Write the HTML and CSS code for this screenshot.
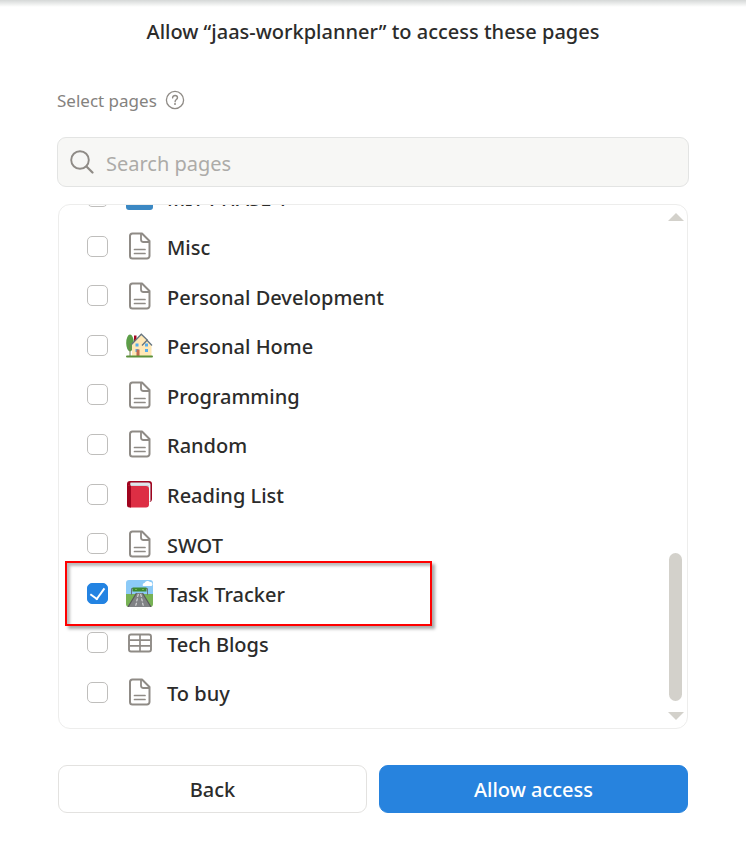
FILE: index.html
```html
<!DOCTYPE html>
<html lang="en">
<head>
  <meta charset="UTF-8" />
  <meta name="viewport" content="width=device-width, initial-scale=1" />
  <title>Allow access</title>
  <link rel="stylesheet" href="styles.css">
</head>
<body>

  <svg class="sprite" aria-hidden="true">
    <symbol id="icon-page" viewBox="0 0 28 28">
      <path d="M6.500 1.500h9.500l7.500 7.500v15a2.500 2.500 0 0 1-2.500 2.500H6.500a2.500 2.500 0 0 1-2.500-2.500V4a2.500 2.500 0 0 1 2.500-2.500z" fill="none" stroke="#8f8b86" stroke-width="2" stroke-linejoin="round"/>
      <path d="M15 2v5.500a2.500 2.500 0 0 0 2.500 2.500H23" fill="none" stroke="#8f8b86" stroke-width="1.800"/>
      <path d="M8.500 17.500h10.500M8.500 21.500h10.500" stroke="#8f8b86" stroke-width="1.700" stroke-linecap="round"/>
    </symbol>
    <symbol id="icon-table" viewBox="0 0 28 28">
      <rect x="3" y="5.500" width="22" height="17" rx="2" fill="none" stroke="#8f8b86" stroke-width="1.900"/>
      <path d="M3.500 11.200h21M3.500 16.800h21M14 5.500v17" stroke="#8f8b86" stroke-width="1.700"/>
    </symbol>
  </svg>

  <main class="dialog">
    <h1>Allow “jaas-workplanner” to access these pages</h1>

    <div class="select-label">
      <label for="search">Select pages</label>
      <svg class="help" viewBox="0 0 20 20" aria-hidden="true">
        <circle cx="10" cy="10" r="8.600" fill="none" stroke="#8f8b86" stroke-width="1.300"/>
        <path d="M7.600 7.900c0-1.500 1.100-2.400 2.500-2.400s2.400.9 2.400 2.200c0 1.800-2.400 1.900-2.400 4" fill="none" stroke="#8f8b86" stroke-width="1.400" stroke-linecap="round"/>
        <circle cx="10" cy="14" r="1" fill="#8f8b86"/>
      </svg>
    </div>

    <div class="search">
      <svg viewBox="0 0 24 24" aria-hidden="true">
        <circle cx="10" cy="10" r="8.800" fill="none" stroke="#8f8b86" stroke-width="1.900"/>
        <path d="M16.500 16.500l6 6" stroke="#8f8b86" stroke-width="2.200" stroke-linecap="round"/>
      </svg>
      <input type="text" id="search" placeholder="Search pages">
    </div>

    <div class="panel">
      <div class="pages">
        <label class="page">
          <input type="checkbox">
          <svg class="icon" viewBox="0 0 28 28" aria-hidden="true">
            <rect x="0" y="1" width="27" height="26" rx="3" fill="#3b88c3"/>
            <path d="M13.500 6v16" stroke="#fff" stroke-width="3"/>
          </svg>
          <span>MIT PHASE 1</span>
        </label>
        <label class="page">
          <input type="checkbox">
          <svg class="icon" aria-hidden="true"><use href="#icon-page"/></svg>
          <span>Misc</span>
        </label>
        <label class="page">
          <input type="checkbox">
          <svg class="icon" aria-hidden="true"><use href="#icon-page"/></svg>
          <span>Personal Development</span>
        </label>
        <label class="page">
          <input type="checkbox">
          <svg class="icon" viewBox="0 0 28 28" aria-hidden="true">
            <ellipse cx="4" cy="12" rx="3.800" ry="8.500" fill="#5c9e48"/>
            <path d="M3.500 13h1v12h-1z" fill="#77804f"/>
            <path d="M8 4.500h2.500V11H8z" fill="#a0041e"/>
            <path d="M6 13l9-9.500 6 6 4.500 5.500v11H6z" fill="#ffe8b6"/>
            <path d="M5.500 13.500L15.300 3.200l6.200 6" fill="none" stroke="#66757f" stroke-width="1.300"/>
            <path d="M16 14.500l5-5.300 5 5.300" fill="none" stroke="#66757f" stroke-width="1.300"/>
            <path d="M9.500 12.500h3v3h-3zM9.500 18h3v3h-3zM19 12.500h3v3h-3zM19 18h3v3h-3z" fill="#55acee"/>
            <path d="M10.500 18.500h3v6.500h-3z" fill="#c1694f"/>
            <rect x="0" y="24.500" width="27" height="2" rx="1" fill="#5c913b"/>
          </svg>
          <span>Personal Home</span>
        </label>
        <label class="page">
          <input type="checkbox">
          <svg class="icon" aria-hidden="true"><use href="#icon-page"/></svg>
          <span>Programming</span>
        </label>
        <label class="page">
          <input type="checkbox">
          <svg class="icon" aria-hidden="true"><use href="#icon-page"/></svg>
          <span>Random</span>
        </label>
        <label class="page">
          <input type="checkbox">
          <svg class="icon" viewBox="0 0 28 28" aria-hidden="true">
            <path d="M4 1h19a3 3 0 0 1 3 3v15a3 3 0 0 1-3 3H4a3 3 0 0 1-3-3V4a3 3 0 0 1 3-3z" fill="#a0041e"/>
            <path d="M4.500 2.500h18a2 2 0 0 1 2 2V21H5z" fill="#ccd6dd"/>
            <path d="M4 4h18a1.500 1.500 0 0 1 1.500 1.500V22" fill="none" stroke="#fff" stroke-width=".8"/>
            <path d="M2 5c1 .7 2 1 3 1h15a3 3 0 0 1 3 3v15.500a3 3 0 0 1-3 3H4z" fill="#dd2e44"/>
            <path d="M1 4c0 1.500 1.500 2 4 2v21.500H3.500a2.500 2.500 0 0 1-2.500-2.500z" fill="#a0041e"/>
          </svg>
          <span>Reading List</span>
        </label>
        <label class="page">
          <input type="checkbox">
          <svg class="icon" aria-hidden="true"><use href="#icon-page"/></svg>
          <span>SWOT</span>
        </label>
        <label class="page highlight">
          <input type="checkbox" checked>
          <svg class="icon" viewBox="0 0 28 28" aria-hidden="true">
            <path d="M3 1h21a3 3 0 0 1 3 3v12H0V4a3 3 0 0 1 3-3z" fill="#8ccaf7"/>
            <path d="M0 15h27v10a3 3 0 0 1-3 3H3a3 3 0 0 1-3-3z" fill="#77b255"/>
            <path d="M11 14h5l9 14H2z" fill="#808285"/>
            <path d="M10.500 14L2 28M16.500 14L25 28" stroke="#58595b" stroke-width="1.200"/>
            <path d="M12.300 15L9.500 28M14.700 15l2.800 13" stroke="#e6e7e8" stroke-width="1" stroke-dasharray="3 1.500"/>
            <path d="M5.500 16V9.500h16V16" fill="none" stroke="#66757f" stroke-width="1"/>
            <rect x="6.500" y="8.500" width="14" height="4" fill="#3e8a2f"/>
            <path d="M9 10.500h2M16 10.500h2" stroke="#77b255" stroke-width="1"/>
            <path d="M17 7a2 2 0 0 1 1.500-3 3.300 3.300 0 0 1 5.500-1 2.200 2.200 0 0 1 1.500 4z" fill="#fff"/>
          </svg>
          <span>Task Tracker</span>
        </label>
        <label class="page">
          <input type="checkbox">
          <svg class="icon" aria-hidden="true"><use href="#icon-table"/></svg>
          <span>Tech Blogs</span>
        </label>
        <label class="page">
          <input type="checkbox">
          <svg class="icon" aria-hidden="true"><use href="#icon-page"/></svg>
          <span>To buy</span>
        </label>
      </div>

      <div class="scrollbar" aria-hidden="true">
        <div class="arrow up"></div>
        <div class="thumb"></div>
        <div class="arrow down"></div>
      </div>
    </div>

    <div class="actions">
      <button type="button" class="back">Back</button>
      <button type="button" class="allow">Allow access</button>
    </div>
  </main>

</body>
</html>
```

FILE: styles.css
```css
* {
  box-sizing: border-box;
}
body {
  margin: 0;
  background: linear-gradient(#d5d8d7, #fff 7px) no-repeat #fff;
  color: #2c2c2b;
  font-family: "Segoe UI", "Noto Sans", sans-serif;
  font-size: 20px;
}
.sprite {
  position: absolute;
  width: 0;
  height: 0;
}
.dialog {
  padding: 16px 58px 35px;
}
h1 {
  margin: 0;
  font-size: 20px;
  line-height: 32px;
  font-weight: 500;
  text-align: center;
}
.select-label {
  display: flex;
  align-items: center;
  gap: 8px;
  height: 24px;
  margin: 40px -1px 0;
  color: #84827e;
  font-size: 17px;
}
.help {
  width: 20px;
  height: 20px;
}
.search {
  display: flex;
  align-items: center;
  gap: 12px;
  height: 50px;
  margin: 25px -1px 0;
  padding: 0 12px;
  border: 1px solid #e3e4e3;
  border-radius: 9px;
  background: #f7f7f5;
}
.search svg {
  flex: none;
  width: 24px;
  height: 24px;
}
.search input {
  flex: 1;
  min-width: 0;
  padding: 2px 0 0;
  border: none;
  outline: none;
  background: none;
  color: inherit;
  font: inherit;
}
.search input::placeholder {
  color: #acaba8;
  opacity: 1;
}

/* page list, scrolled to its end */
.panel {
  display: flex;
  align-items: flex-end;
  height: 525px;
  margin-top: 17px;
  border: 1px solid #ededec;
  border-radius: 12px;
  overflow: hidden;
}
.pages {
  flex: 1;
  display: grid;
  grid-auto-rows: 1fr;
  height: 545px;
  margin-bottom: 11px;
}
.page {
  position: relative;
  display: flex;
  align-items: center;
  padding-left: 28px;
  font-weight: 500;
  cursor: pointer;
}
.page input {
  flex: none;
  display: grid;
  place-items: center;
  appearance: none;
  width: 21px;
  height: 21px;
  margin: 0 18px 0 0;
  border: 1px solid #bfbebc;
  border-radius: 5px;
  background: #fff;
}
.page input:checked {
  border-color: #2383e2;
  background: #2383e2;
}
.page input:checked::after {
  content: "";
  width: 7px;
  height: 12px;
  margin-bottom: 3px;
  border: solid #fff;
  border-width: 0 2px 2px 0;
  transform: rotate(36deg);
}
.icon {
  flex: none;
  width: 28px;
  height: 28px;
  margin-right: 13px;
}
.page span {
  padding-top: 3px;
}
.highlight::after {
  content: "";
  position: absolute;
  top: -7px;
  bottom: -8px;
  left: 6px;
  width: 367px;
  box-sizing: border-box;
  border: 2px solid #f00;
  box-shadow: 3px 3px 3px #aaa, inset 3px 3px 3px #bbb;
}

.scrollbar {
  align-self: stretch;
  display: flex;
  flex-direction: column;
  align-items: center;
  width: 15px;
  margin-right: 4px;
  padding: 8px 0;
}
.arrow {
  border: solid transparent;
  border-width: 0 8px;
}
.up {
  border-bottom: 8px solid #d3d1cb;
}
.down {
  border-top: 8px solid #d3d1cb;
}
.thumb {
  width: 13px;
  height: 148px;
  margin: auto 0 11px;
  border-radius: 7px;
  background: #d3d1cb;
}

.actions {
  display: flex;
  gap: 12px;
  margin-top: 36px;
}
.actions button {
  flex: 1;
  height: 48px;
  padding: 0;
  border: 1px solid #e3e2e0;
  border-radius: 9px;
  background: #fff;
  color: inherit;
  font: inherit;
  font-weight: 500;
  cursor: pointer;
}
.actions .allow {
  border-color: #2783de;
  background: #2783de;
  color: #fff;
}
```
